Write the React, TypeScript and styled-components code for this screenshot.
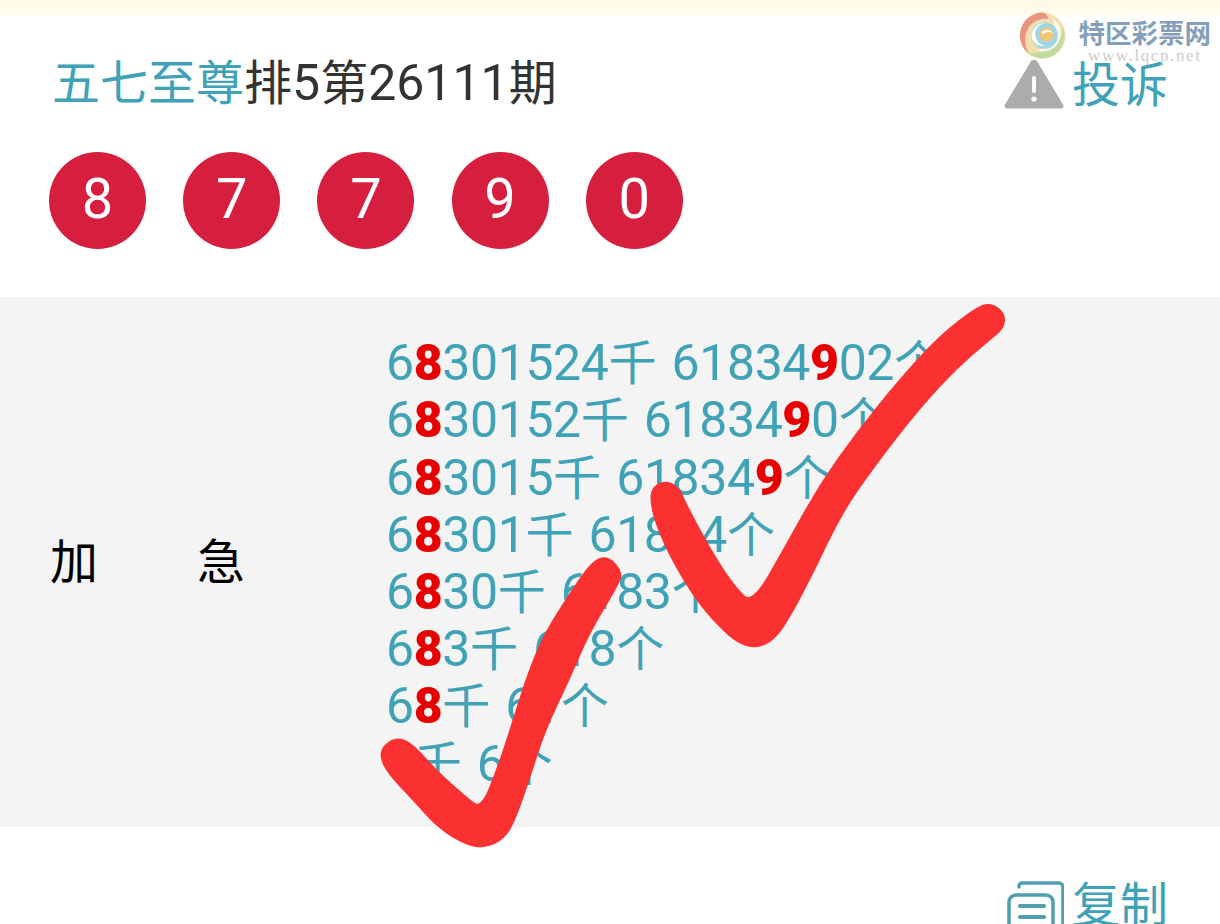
import React from 'react';
import styled, { createGlobalStyle } from 'styled-components';

const GlobalStyle = createGlobalStyle`
    html, body {
        margin: 0;
        padding: 0;
        background: #fff;
    }
    body {
        font-family: Roboto, "Noto Sans CJK SC", sans-serif;
    }
`;

const Page = styled.div`
    position: relative;
    width: 1220px;
    height: 924px;
    overflow: hidden;
    background: #fff;
`;

const TopStrip = styled.div`
    height: 15px;
    background: #fffaea;
`;

const TitleRow = styled.div`
    height: 137px;
    padding: 0 52px 0 52px;
    display: flex;
    align-items: center;
    justify-content: space-between;
    font-size: 50px;
    color: #333;
`;

const Title = styled.div`
    white-space: nowrap;
    margin-top: -10px;
`;

const Han = styled.span`
    font-size: 48px;
    letter-spacing: 0;
`;

const Accent = styled.span`
    color: #40a2b6;
    font-size: 48px;
`;

const Action = styled.div`
    display: flex;
    align-items: center;
    gap: 8px;
    padding-top: 4px;
    color: #40a2b6;
    font-size: 48px;
    line-height: 58px;
`;

const Balls = styled.div`
    height: 145px;
    padding-left: 49px;
    display: flex;
    gap: 37.2px;
`;

const Ball = styled.div`
    width: 97px;
    height: 97px;
    border-radius: 50%;
    background: #d61f3f;
    color: #fff;
    font-size: 56px;
    line-height: 94px;
    text-align: center;
`;

const Panel = styled.div`
    height: 530px;
    background: #f4f4f4;
    display: grid;
    grid-template-columns: 386px 1fr;
    align-items: center;
`;

const Label = styled.div`
    padding-left: 50px;
    margin-top: -8px;
    display: flex;
    gap: 99px;
    font-size: 48px;
    color: #000;
`;

const Lines = styled.div`
    padding-top: 4px;
    font-size: 50px;
    line-height: 57.2px;
    letter-spacing: -0.4px;
    color: #40a2b6;
    white-space: pre;
    word-spacing: 3px;
`;

const Line = styled.div`
    height: 57.2px;
`;

const Hot = styled.b`
    color: #e60000;
    font-weight: 900;
`;

const Footer = styled.div`
    padding: 46px 52px 0 0;
    display: flex;
    justify-content: flex-end;
`;

const Watermark = styled.div`
    position: absolute;
    top: 12px;
    right: 9px;
    display: flex;
    gap: 13px;
    align-items: flex-start;
    opacity: 0.85;
`;

const WatermarkText = styled.div`
    display: flex;
    flex-direction: column;
    align-items: center;
    margin-top: 4px;
`;

const WatermarkName = styled.div`
    font-family: "Noto Sans CJK SC", sans-serif;
    font-size: 26.5px;
    line-height: 32px;
    font-weight: 700;
    color: #6f8fae;
`;

const WatermarkUrl = styled.div`
    font-family: "Liberation Serif", serif;
    font-size: 17px;
    line-height: 16px;
    letter-spacing: 1.6px;
    color: #c4c4c4;
`;

const Ticks = styled.svg`
    position: absolute;
    left: 0;
    top: 0;
    pointer-events: none;
`;

const lines: [string, string][] = [
    ['301524', '61834|9|02'],
    ['30152', '61834|9|0'],
    ['3015', '61834|9|'],
    ['301', '61834'],
    ['30', '6183'],
    ['3', '618'],
    ['', '61'],
];

const balls = ['8', '7', '7', '9', '0'];

const tickA: number[][] = [
    [382, 757], [390, 773], [413, 797], [440, 827], [467, 843], [485, 846], [503, 837], [513, 820],
    [527, 780], [543, 730], [567, 680], [587, 633], [617, 583], [620, 572], [607, 558], [593, 563],
    [570, 597], [547, 633], [530, 673], [513, 727], [500, 767], [482, 812], [463, 797], [433, 770],
    [413, 747], [398, 739], [385, 747],
];

const tickB: number[][] = [
    [652, 498], [657, 522], [673, 558], [697, 598], [720, 625], [740, 642], [757, 646], [773, 638],
    [787, 618], [810, 575], [840, 512], [873, 465], [917, 408], [957, 365], [990, 337], [1002, 327],
    [1003, 315], [993, 306], [980, 307], [940, 338], [900, 382], [857, 435], [820, 488], [790, 542],
    [753, 607], [733, 588], [707, 548], [683, 502], [677, 488], [665, 483], [655, 488],
];

// closed outline through the midpoints of the hand-traced points
const outline = (pts: number[][]) => {
    const mid = (a: number[], b: number[]) => `${(a[0] + b[0]) / 2} ${(a[1] + b[1]) / 2}`;
    let d = `M${mid(pts[pts.length - 1], pts[0])}`;
    pts.forEach((p, i) => {
        d += `Q${p[0]} ${p[1]} ${mid(p, pts[(i + 1) % pts.length])}`;
    });
    return d + 'Z';
};

const Swirl = () => (
    <svg width="47" height="47" viewBox="0 0 46 46" fill="none">
        <circle cx="23" cy="23" r="22.5" fill="#f2d9a0" />
        <path d="M23 .5A22.5 22.5 0 0 0 10 41C4 32 4 16 16 9c4-2 10-3 13-2C28 3 26 1 23 .5z" fill="#e5826a" />
        <path d="M10 41c9 7 24 6 31-6 3-6 5-13 2-20-1 10-6 19-14 22-7 3-14 3-19 4z" fill="#b4d68c" />
        <path d="M33 6c8 5 10 16 6 23-4 8-14 12-22 8 8 0 15-4 17-11 2-8 0-14-1-20z" fill="#fff" opacity="0.75" />
        <circle cx="25" cy="23" r="13" fill="#8fd0e0" />
        <path d="M13 27c-3-9 5-17 13-16-6 1-11 5-10 12 1 5 4 9 9 10-6 1-10-2-12-6z" fill="#fff" />
        <circle cx="27" cy="22" r="7" fill="#f0bc5e" />
        <path d="M22 20c3-4 9-3 11 1-3-2-7-2-9 1z" fill="#fff" />
    </svg>
);

const WarningIcon = () => (
    <svg width="60" height="52" viewBox="0 2 60 52">
        <path d="M30 3 57 48H3z" fill="#acacac" stroke="#acacac" strokeWidth="5" strokeLinejoin="round" />
        <rect x="28" y="18" width="4" height="17" rx="2" fill="#fff" />
        <circle cx="30" cy="41" r="2.6" fill="#fff" />
    </svg>
);

const CopyIcon = () => (
    <svg width="58" height="58" viewBox="0 0 58 58" fill="none" stroke="#4f9fae" strokeWidth="3.5" strokeLinecap="round">
        <path d="M13 10V9a3 3 0 0 1 3-3h37a4 4 0 0 1 4 4v36" />
        <rect x="3" y="18" width="44" height="48" rx="7" />
        <path d="M14 29h24M14 40h24M14 51h24" strokeWidth="4" />
    </svg>
);

const App: React.FC = () => (
    <Page>
        <GlobalStyle />
        <TopStrip />
        <TitleRow>
            <Title>
                <Accent>五七至尊</Accent>
                <Han>排</Han>5<Han>第</Han>26111<Han>期</Han>
            </Title>
            <Action>
                <WarningIcon />
                投诉
            </Action>
        </TitleRow>
        <Balls>
            {balls.map((n, i) => (
                <Ball key={i}>{n}</Ball>
            ))}
        </Balls>
        <Panel>
            <Label>
                <span>加</span>
                <span>急</span>
            </Label>
            <Lines>
                {lines.map(([a, b], i) => {
                    const [head, hot, tail] = b.split('|');
                    return (
                        <Line key={i}>
                            6<Hot>8</Hot>
                            {a}
                            <Han>千</Han> {head}
                            {hot && <Hot>{hot}</Hot>}
                            {tail}
                            <Han>个</Han>
                        </Line>
                    );
                })}
                <Line>
                    6<Han>千</Han> 6<Han>个</Han>
                </Line>
            </Lines>
        </Panel>
        <Footer>
            <Action>
                <CopyIcon />
                复制
            </Action>
        </Footer>
        <Watermark>
            <Swirl />
            <WatermarkText>
                <WatermarkName>特区彩票网</WatermarkName>
                <WatermarkUrl>www.lqcp.net</WatermarkUrl>
            </WatermarkText>
        </Watermark>
        <Ticks width="1220" height="924" viewBox="0 0 1220 924" fill="#fb3131" stroke="#fb3131" strokeWidth="5" strokeLinejoin="round">
            <path d={outline(tickA)} />
            <path d={outline(tickB)} />
        </Ticks>
    </Page>
);

export default App;
